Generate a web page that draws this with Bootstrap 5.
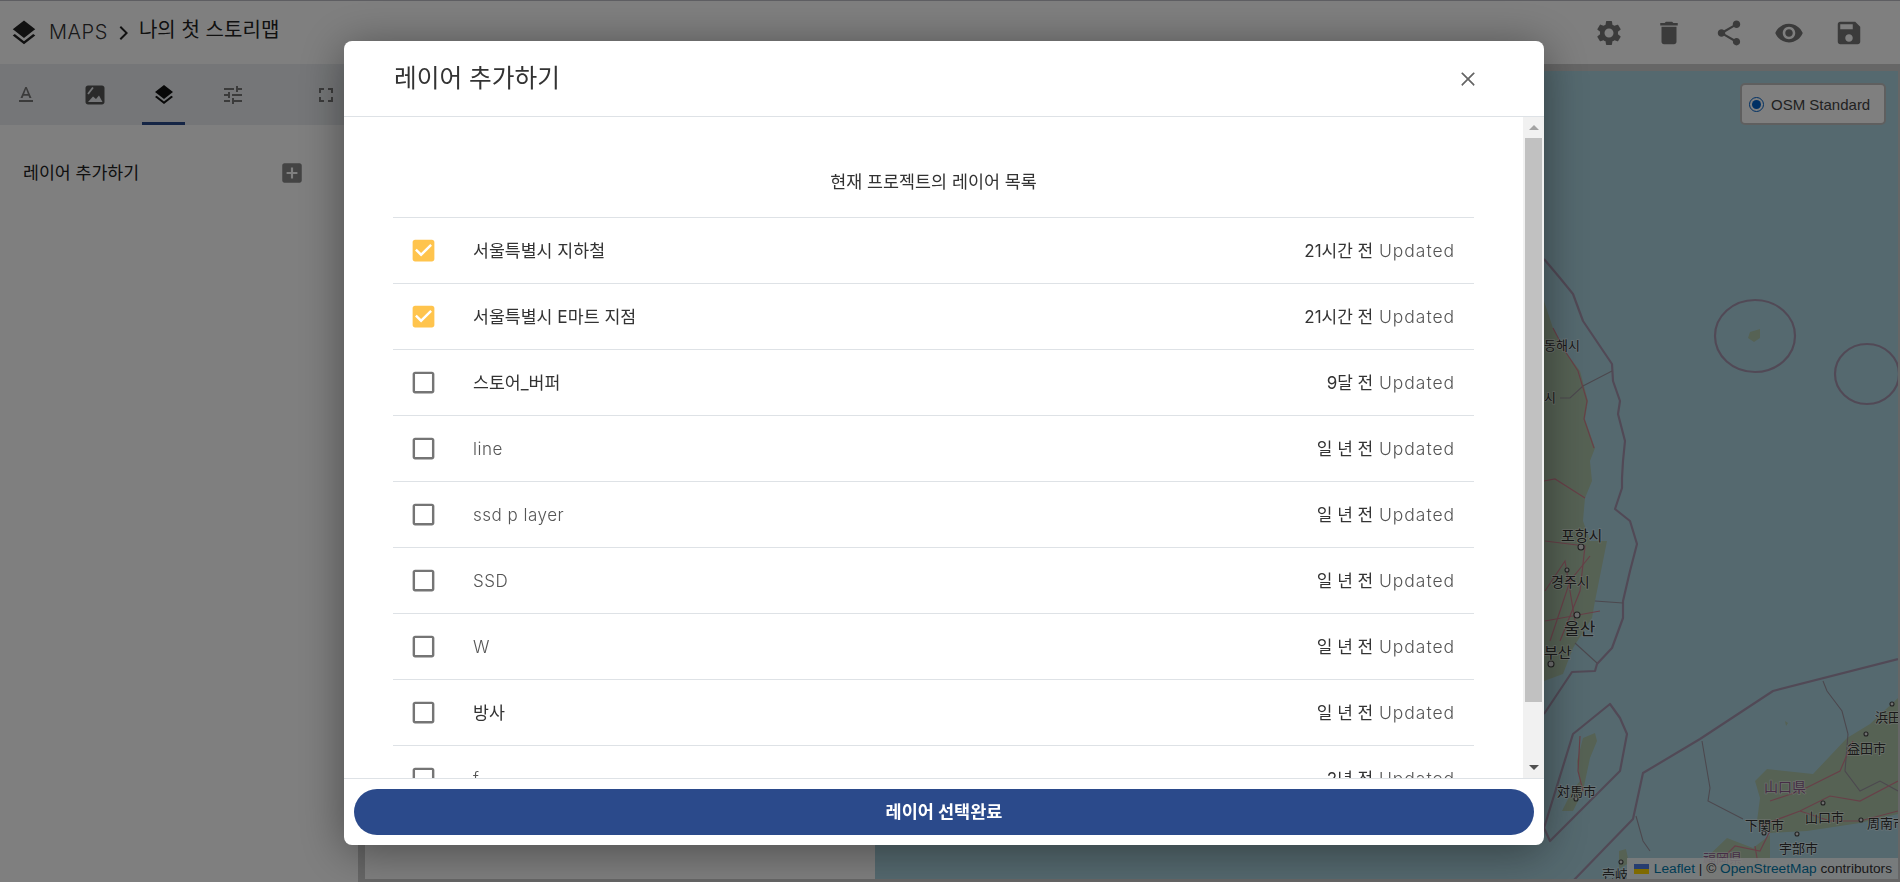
<!DOCTYPE html>
<html lang="ko">
<head>
<meta charset="utf-8">
<title>MAPS</title>
<link href="https://cdn.jsdelivr.net/npm/bootstrap@5.3.0/dist/css/bootstrap.min.css" rel="stylesheet">
<style>
html,body{height:100%;overflow:hidden}
body{font-family:Inter,"Noto Sans CJK KR","Noto Sans",sans-serif;color:#333;font-size:17px;font-weight:400}
svg{display:block;fill:currentColor}
.app-top{height:64px;border-top:1px solid #bdbdc4;background:#fff;flex:none}
.app-logo{width:30px;height:30px;color:#222;margin:0 10px 0 9px}
.app-crumb{font-size:20px;font-weight:300;letter-spacing:.55px;color:#333;margin-bottom:2px}
.app-name{font-size:20px;font-weight:400;color:#222;letter-spacing:.05px;margin-bottom:5px}
.app-chev{width:24px;height:24px;color:#222;margin:0 4px 0 3px}
.app-tools{gap:30px;padding-right:36px;color:#777}
.app-tools svg{width:30px;height:30px}
.app-side{width:358px;flex:none;background:#fff}
.side-tabs{height:61px;background:#eaedf0;color:#777}
.side-tab{width:69px;height:61px;flex:none;display:flex;align-items:center;justify-content:center;position:relative}
.side-tab svg{width:24px;height:24px}
.side-tab.is-on{color:#111}
.side-tab.is-on::after{content:"";position:absolute;left:13px;right:13px;bottom:0;height:3px;background:#2b4a8b}
.tab-gap{margin-left:24px}
.side-add{padding:35px 53px 0 23px;font-size:17.3px;color:#222;font-weight:400}
.side-add svg{width:26px;height:26px;color:#888}
.app-stage{border:solid #cdcdcd;border-width:7px 2px 3px 7px;min-width:0}
.stage-panel{width:510px;flex:none;background:#fff}
.stage-map{background:#aad3df;position:relative;overflow:hidden}
.stage-map>svg{width:1023px;height:809px;position:absolute;left:0;top:0}
.map-layers{position:absolute;top:12px;right:12px;width:146px;height:42px;background:#fff;border:2px solid rgba(0,0,0,.25);border-radius:5px;font:15px "Liberation Sans",Arial,sans-serif;color:#444;padding-left:7px}
.map-radio{width:15px;height:15px;border-radius:50%;border:1.5px solid #0060c8;margin-right:7px;padding:2px;flex:none}
.map-radio i{display:block;width:100%;height:100%;border-radius:50%;background:#0060c8}
.map-attr{position:absolute;right:0;bottom:0;height:21px;width:271px;background:rgba(255,255,255,.8);font:13.7px "Liberation Sans",Arial,sans-serif;color:#333;padding:0 6px 0 7px;white-space:nowrap}
.map-attr a{color:#0078a8;text-decoration:none}
.map-flag{width:15px;height:10px;display:inline-block;margin-right:5px;background:linear-gradient(#4c7be1 50%,#ffd500 50%)}
.modal.app-modal{display:block}
.app-modal .modal-dialog{max-width:none;width:1200px;margin:41px 0 0 344px}
.app-modal .modal-content{height:804px;border:0;border-radius:8px;box-shadow:0 6px 46px rgba(0,0,0,.42)}
.app-modal .modal-header{height:76px;padding:0 68px 0 50px;border-bottom:1px solid #dee2e6;flex:none}
.app-modal .modal-title{font-size:24.7px;font-weight:400;color:#333;line-height:1}
.app-modal .btn-close{padding:0;width:16px;height:16px;background-size:14px;opacity:.6;margin:0}
.app-modal .modal-body{padding:0;overflow:hidden;flex:1 1 0;min-height:0}
.fake-scroll{width:21px;flex:none;background:#f1f1f1;padding:0 2px}
.fake-end{height:21px;flex:none;display:flex;align-items:center;justify-content:center}
.fake-up,.fake-down{width:0;height:0;border-left:5px solid transparent;border-right:5px solid transparent}
.fake-up{border-bottom:5px solid #a3a3a3}
.fake-down{border-top:5px solid #505050}
.fake-thumb{height:564px;background:#c1c1c1;flex:none}
.layer-sheet{padding:0 49px 31px 49px;min-width:0}
.layer-head{height:100px;padding-top:51px;text-align:center;font-size:17.4px;color:#333;line-height:28px}
.layer-row{height:66px;border-top:1px solid #dee2e6;padding:0 19px 0 16px}
.layer-row svg{width:29px;height:29px;flex:none;color:#757575;margin-right:35px}
.layer-row.is-on svg{color:#ffc44d}
.layer-name{font-size:17.3px;color:#333}
.layer-name.is-latin{font-weight:300;font-size:17px;letter-spacing:.5px;color:#555;padding-top:2px}
.layer-when{font-size:17px;color:#333;padding-top:2px}
.layer-when b{font-weight:300;font-size:17.5px;letter-spacing:.95px;color:#555;margin-left:1px}
.app-modal .modal-footer{padding:10px;border-top:1px solid #dee2e6;flex:none;height:67px}
.app-modal .modal-footer .btn{margin:0;width:100%;height:46px;border-radius:23px;background:#2b4a8b;border:0;color:#fff;font-size:17.5px;font-weight:700;padding:0}
.m-t{font-family:"Noto Sans CJK JP",sans-serif;fill:#333;stroke:#fff;stroke-width:1.5px;stroke-opacity:.5;paint-order:stroke;font-size:15px}
.m-k{font-family:"Noto Sans CJK KR",sans-serif}
</style>
</head>
<body class="d-flex flex-column">
<header class="app-top d-flex align-items-center justify-content-between">
  <div class="d-flex align-items-center">
    <svg class="app-logo" viewBox="0 0 24 24"><path d="M11.99 18.54l-7.37-5.73L3 14.07l9 7 9-7-1.63-1.27-7.38 5.74zM12 16l7.36-5.73L21 9l-9-7-9 7 1.63 1.27L12 16z"/></svg>
    <span class="app-crumb">MAPS</span>
    <svg class="app-chev" viewBox="0 0 24 24"><path d="M8.6 6.4L10 5l7 7-7 7-1.4-1.4 5.6-5.6z"/></svg>
    <span class="app-name">나의 첫 스토리맵</span>
  </div>
  <div class="app-tools d-flex align-items-center">
    <svg viewBox="0 0 24 24"><path d="M19.14 12.94c.04-.3.06-.61.06-.94 0-.32-.02-.64-.07-.94l2.03-1.58c.18-.14.23-.41.12-.61l-1.92-3.32c-.12-.22-.37-.29-.59-.22l-2.39.96c-.5-.38-1.03-.7-1.62-.94l-.36-2.54c-.04-.24-.24-.41-.48-.41h-3.84c-.24 0-.43.17-.47.41l-.36 2.54c-.59.24-1.13.57-1.62.94l-2.39-.96c-.22-.08-.47 0-.59.22L2.74 8.87c-.12.21-.08.47.12.61l2.03 1.58c-.05.3-.09.63-.09.94s.02.64.07.94l-2.03 1.58c-.18.14-.23.41-.12.61l1.92 3.32c.12.22.37.29.59.22l2.39-.96c.5.38 1.03.7 1.62.94l.36 2.54c.05.24.24.41.48.41h3.84c.24 0 .44-.17.47-.41l.36-2.54c.59-.24 1.13-.56 1.62-.94l2.39.96c.22.08.47 0 .59-.22l1.92-3.32c.12-.22.07-.47-.12-.61l-2.01-1.58zM12 15.6c-1.98 0-3.6-1.62-3.6-3.6s1.62-3.6 3.6-3.6 3.6 1.62 3.6 3.6-1.62 3.6-3.6 3.6z"/></svg>
    <svg viewBox="0 0 24 24"><path d="M6 19c0 1.1.9 2 2 2h8c1.1 0 2-.9 2-2V7H6v12zM19 4h-3.5l-1-1h-5l-1 1H5v2h14V4z"/></svg>
    <svg viewBox="0 0 24 24"><path d="M18 16.08c-.76 0-1.44.3-1.96.77L8.91 12.7c.05-.23.09-.46.09-.7s-.04-.47-.09-.7l7.05-4.11c.54.5 1.25.81 2.04.81 1.66 0 3-1.34 3-3s-1.34-3-3-3-3 1.34-3 3c0 .24.04.47.09.7L8.04 9.81C7.5 9.31 6.79 9 6 9c-1.66 0-3 1.34-3 3s1.34 3 3 3c.79 0 1.5-.31 2.04-.81l7.12 4.16c-.05.21-.08.43-.08.65 0 1.61 1.31 2.92 2.92 2.92 1.61 0 2.92-1.31 2.92-2.92s-1.31-2.92-2.92-2.92z"/></svg>
    <svg viewBox="0 0 24 24"><path d="M12 4.5C7 4.5 2.73 7.61 1 12c1.73 4.39 6 7.5 11 7.5s9.27-3.11 11-7.5c-1.73-4.39-6-7.5-11-7.5zM12 17c-2.76 0-5-2.24-5-5s2.24-5 5-5 5 2.24 5 5-2.24 5-5 5zm0-8c-1.66 0-3 1.34-3 3s1.34 3 3 3 3-1.34 3-3-1.34-3-3-3z"/></svg>
    <svg viewBox="0 0 24 24"><path d="M17 3H5c-1.11 0-2 .9-2 2v14c0 1.1.89 2 2 2h14c1.1 0 2-.9 2-2V7l-4-4zm-5 16c-1.66 0-3-1.34-3-3s1.34-3 3-3 3 1.34 3 3-1.34 3-3 3zm3-10H5V5h10v4z"/></svg>
  </div>
</header>
<div class="d-flex flex-grow-1" style="min-height:0">
  <aside class="app-side">
    <nav class="side-tabs d-flex">
      <div class="side-tab" style="margin-left:-9px"><svg viewBox="0 0 24 24"><path d="M5 17v2h14v-2H5zm4.5-4.2h5l.9 2.2h2.100L12.750 4h-1.500L6.500 15h2.100l.9-2.200zM12 5.980L13.870 11h-3.740L12 5.980z"/></svg></div>
      <div class="side-tab"><svg viewBox="0 0 24 24"><path fill="#555" d="M5 2.500h14c1.400 0 2.500 1.100 2.500 2.500v14c0 1.400-1.100 2.500-2.500 2.500H5c-1.400 0-2.500-1.100-2.500-2.500V5c0-1.400 1.100-2.500 2.500-2.500z"/><path d="M5 11l5-6.500" stroke="#eaedf0" stroke-width="1.800" fill="none"/><path d="M5 19l5-5.500 3 2.500 3-3.500 3.500 6.500z" fill="#eaedf0"/></svg></div>
      <div class="side-tab is-on"><svg viewBox="0 0 24 24"><path d="M11.990 18.540l-7.370-5.730L3 14.070l9 7 9-7-1.630-1.270-7.380 5.740zM12 16l7.360-5.730L21 9l-9-7-9 7 1.630 1.270L12 16z"/></svg></div>
      <div class="side-tab"><svg viewBox="0 0 24 24"><path d="M3 17v2h6v-2H3zM3 5v2h10V5H3zm10 16v-2h8v-2h-8v-2h-2v6h2zM7 9v2H3v2h4v2h2V9H7zm14 4v-2H11v2h10zm-6-4h2V7h4V5h-4V3h-2v6z"/></svg></div>
      <div class="side-tab tab-gap"><svg viewBox="0 0 24 24"><path d="M7 14H5v5h5v-2H7v-3zm-2-4h2V7h3V5H5v5zm12 7h-3v2h5v-5h-2v3zM14 5v2h3v3h2V5h-5z"/></svg></div>
    </nav>
    <div class="side-add d-flex align-items-center justify-content-between">
      <span>레이어 추가하기</span>
      <svg viewBox="0 0 24 24"><path d="M19 3H5c-1.110 0-2 .9-2 2v14c0 1.100.89 2 2 2h14c1.100 0 2-.9 2-2V5c0-1.100-.9-2-2-2zm-2 10h-4v4h-2v-4H7v-2h4V7h2v4h4v2z"/></svg>
    </div>
  </aside>
  <main class="app-stage d-flex flex-grow-1">
    <section class="stage-panel"></section>
    <section class="stage-map flex-grow-1">
      <svg viewBox="875 70 1023 809">
        <g fill="#acc4a9" stroke="none">
          <path d="M875 300L1544 300 1553 327 1565 350 1580 370 1588 400 1585 418 1595 447 1590 460 1592 480 1585 497 1583 520 1590 540 1607 540 1603 560 1595 600 1592 617 1573 647 1563 673 1544 680 875 700z"/>
          <path d="M1595 732L1583 737 1577 760 1580 780 1572 790 1562 810 1573 810 1583 790 1590 757 1597 740z"/>
          <path d="M1898 697L1870 723 1847 737 1813 773 1767 768 1755 780 1760 797 1757 820 1767 830 1770 832 1807 830 1860 822 1898 813z"/>
          <path d="M1770 834L1753 847 1727 837 1703 860 1703 880 1770 880z"/>
          <path d="M1619 850l7-2 3 14-10 6z"/>
          <path d="M1750 331l10-3 0 9-6 4-6-4z"/>
          <path d="M1785 720l3 2-2 3z"/>
        </g>
        <g fill="none" stroke="#a393ac" stroke-width="2.200" stroke-linejoin="round">
          <path d="M1544 258L1560 277 1573 293 1583 320 1612 363 1613 380 1620 400 1618 413 1625 440 1623 460 1622 477 1622 487 1615 508 1630 520 1637 543 1630 570 1623 600 1623 617 1612 647 1597 663 1595 670 1572 671 1544 713"/>
          <ellipse cx="1755" cy="335" rx="40" ry="36"/>
          <ellipse cx="1867" cy="373" rx="32" ry="30"/>
          <path d="M1610 703L1573 733 1544 827 1550 840 1620 770 1627 733 1620 717z"/>
          <path d="M1898 658L1773 690 1700 738 1643 772 1633 818 1573 880"/>
        </g>
        <g fill="none" stroke="#98909c" stroke-width="1.100">
          <path d="M1612 370L1583 385 1570 397 1560 397"/>
          <path d="M1595 600L1623 602"/><path d="M1575 642L1597 662"/>
          <path d="M1823 680L1827 690 1842 710 1848 733"/>
          <path d="M1702 740L1710 787 1708 800 1743 818"/>
          <path d="M1636 815L1643 840 1650 850"/>
          <path d="M1848 733L1845 770 1860 790 1880 780 1898 790"/>
        </g>
        <g fill="none" stroke="#cf8090" stroke-width="1.200">
          <path d="M1553 327L1565 350 1578 370 1587 400 1584 418 1594 447"/>
          <path d="M1544 480L1555 478 1585 497"/><path d="M1545 540L1585 545 1580 590 1560 640"/>
          <path d="M1545 590L1565 560 1575 620"/><path d="M1545 620L1600 610"/>
          <path d="M1590 555L1570 580 1550 640"/>
          <path d="M1580 735L1578 770 1583 790"/>
          <path d="M1760 825L1800 810 1830 795 1860 800 1898 780"/>
          <path d="M1800 810L1830 820 1860 820 1898 810"/>
          <path d="M1853 740L1840 770 1800 790 1770 800"/>
          <path d="M1770 830L1760 850 1735 845 1710 870"/><path d="M1755 845L1760 875"/>
        </g>
        <g fill="#ddd" stroke="#444" stroke-width="1.100">
          <circle cx="1581" cy="546" r="3"/><circle cx="1567" cy="569" r="2"/><circle cx="1577" cy="614" r="3"/><circle cx="1551" cy="663" r="3"/>
          <circle cx="1576" cy="798" r="2"/><circle cx="1823" cy="802" r="2"/><circle cx="1866" cy="733" r="2"/><circle cx="1892" cy="703" r="2"/>
          <circle cx="1861" cy="819" r="2"/><circle cx="1764" cy="832" r="2"/><circle cx="1797" cy="833" r="2"/><circle cx="1621" cy="861" r="2"/>
        </g>
        <g class="m-t">
          <text x="1561" y="540" class="m-k" font-size="15">포항시</text>
          <text x="1551" y="586" class="m-k" style="font-size:14px">경주시</text>
          <text x="1564" y="634" class="m-k" style="font-size:17px">울산</text>
          <text x="1544" y="657" class="m-k" style="font-size:15px">부산</text>
          <text x="1544" y="349" class="m-k" style="font-size:13px">동해시</text>
          <text x="1544" y="401" class="m-k" style="font-size:13px">시</text>
          <text x="1557" y="795" style="font-size:13px">対馬市</text>
          <text x="1875" y="721" style="font-size:13px">浜田</text>
          <text x="1847" y="752" style="font-size:13px">益田市</text>
          <text x="1764" y="791" style="fill:#8a5a8a;font-size:14px">山口県</text>
          <text x="1805" y="821" style="font-size:13px">山口市</text>
          <text x="1867" y="827" style="font-size:13px">周南市</text>
          <text x="1745" y="829" style="font-size:13px">下関市</text>
          <text x="1779" y="852" style="font-size:13px">宇部市</text>
          <text x="1703" y="862" style="fill:#8a5a8a;font-size:13px">福岡県</text>
          <text x="1602" y="878" style="font-size:13px">壱岐</text>
        </g>
      </svg>
      <div class="map-layers d-flex align-items-center"><span class="map-radio"><i></i></span>OSM Standard</div>
      <div class="map-attr d-flex align-items-center"><span class="map-flag"></span><a href="#">Leaflet</a>&nbsp;|&nbsp;©&nbsp;<a href="#">OpenStreetMap</a>&nbsp;contributors</div>
    </section>
  </main>
</div>

<div class="modal-backdrop show"></div>
<div class="modal app-modal" tabindex="-1">
  <div class="modal-dialog">
    <div class="modal-content">
      <div class="modal-header">
        <h5 class="modal-title">레이어 추가하기</h5>
        <button type="button" class="btn-close" aria-label="Close"></button>
      </div>
      <div class="modal-body d-flex">
        <div class="layer-sheet flex-grow-1">
          <div class="layer-head">현재 프로젝트의 레이어 목록</div>
          <div class="layer-row is-on d-flex align-items-center"><svg viewBox="0 0 24 24"><path d="M19 3H5c-1.110 0-2 .9-2 2v14c0 1.100.89 2 2 2h14c1.110 0 2-.9 2-2V5c0-1.100-.89-2-2-2zm-9 14l-5-5 1.410-1.410L10 14.170l7.590-7.590L19 8l-9 9z"/></svg><span class="layer-name">서울특별시 지하철</span><span class="layer-when ms-auto">21시간 전 <b>Updated</b></span></div>
          <div class="layer-row is-on d-flex align-items-center"><svg viewBox="0 0 24 24"><path d="M19 3H5c-1.110 0-2 .9-2 2v14c0 1.100.89 2 2 2h14c1.110 0 2-.9 2-2V5c0-1.100-.89-2-2-2zm-9 14l-5-5 1.410-1.410L10 14.170l7.590-7.590L19 8l-9 9z"/></svg><span class="layer-name">서울특별시 E마트 지점</span><span class="layer-when ms-auto">21시간 전 <b>Updated</b></span></div>
          <div class="layer-row d-flex align-items-center"><svg viewBox="0 0 24 24"><path d="M19 5v14H5V5h14m0-2H5c-1.100 0-2 .9-2 2v14c0 1.100.9 2 2 2h14c1.100 0 2-.9 2-2V5c0-1.100-.9-2-2-2z"/></svg><span class="layer-name">스토어_버퍼</span><span class="layer-when ms-auto">9달 전 <b>Updated</b></span></div>
          <div class="layer-row d-flex align-items-center"><svg viewBox="0 0 24 24"><path d="M19 5v14H5V5h14m0-2H5c-1.100 0-2 .9-2 2v14c0 1.100.9 2 2 2h14c1.100 0 2-.9 2-2V5c0-1.100-.9-2-2-2z"/></svg><span class="layer-name is-latin">line</span><span class="layer-when ms-auto">일 년 전 <b>Updated</b></span></div>
          <div class="layer-row d-flex align-items-center"><svg viewBox="0 0 24 24"><path d="M19 5v14H5V5h14m0-2H5c-1.100 0-2 .9-2 2v14c0 1.100.9 2 2 2h14c1.100 0 2-.9 2-2V5c0-1.100-.9-2-2-2z"/></svg><span class="layer-name is-latin">ssd p layer</span><span class="layer-when ms-auto">일 년 전 <b>Updated</b></span></div>
          <div class="layer-row d-flex align-items-center"><svg viewBox="0 0 24 24"><path d="M19 5v14H5V5h14m0-2H5c-1.100 0-2 .9-2 2v14c0 1.100.9 2 2 2h14c1.100 0 2-.9 2-2V5c0-1.100-.9-2-2-2z"/></svg><span class="layer-name is-latin">SSD</span><span class="layer-when ms-auto">일 년 전 <b>Updated</b></span></div>
          <div class="layer-row d-flex align-items-center"><svg viewBox="0 0 24 24"><path d="M19 5v14H5V5h14m0-2H5c-1.100 0-2 .9-2 2v14c0 1.100.9 2 2 2h14c1.100 0 2-.9 2-2V5c0-1.100-.9-2-2-2z"/></svg><span class="layer-name is-latin">W</span><span class="layer-when ms-auto">일 년 전 <b>Updated</b></span></div>
          <div class="layer-row d-flex align-items-center"><svg viewBox="0 0 24 24"><path d="M19 5v14H5V5h14m0-2H5c-1.100 0-2 .9-2 2v14c0 1.100.9 2 2 2h14c1.100 0 2-.9 2-2V5c0-1.100-.9-2-2-2z"/></svg><span class="layer-name">방사</span><span class="layer-when ms-auto">일 년 전 <b>Updated</b></span></div>
          <div class="layer-row d-flex align-items-center"><svg viewBox="0 0 24 24"><path d="M19 5v14H5V5h14m0-2H5c-1.100 0-2 .9-2 2v14c0 1.100.9 2 2 2h14c1.100 0 2-.9 2-2V5c0-1.100-.9-2-2-2z"/></svg><span class="layer-name is-latin">f</span><span class="layer-when ms-auto">2년 전 <b>Updated</b></span></div>
        </div>
        <div class="fake-scroll d-flex flex-column" aria-hidden="true">
          <div class="fake-end"><span class="fake-up"></span></div>
          <div class="fake-thumb"></div>
          <div class="fake-end mt-auto"><span class="fake-down"></span></div>
        </div>
      </div>
      <div class="modal-footer">
        <button type="button" class="btn">레이어 선택완료</button>
      </div>
    </div>
  </div>
</div>
<script src="https://cdn.jsdelivr.net/npm/bootstrap@5.3.0/dist/js/bootstrap.bundle.min.js"></script>
</body>
</html>
